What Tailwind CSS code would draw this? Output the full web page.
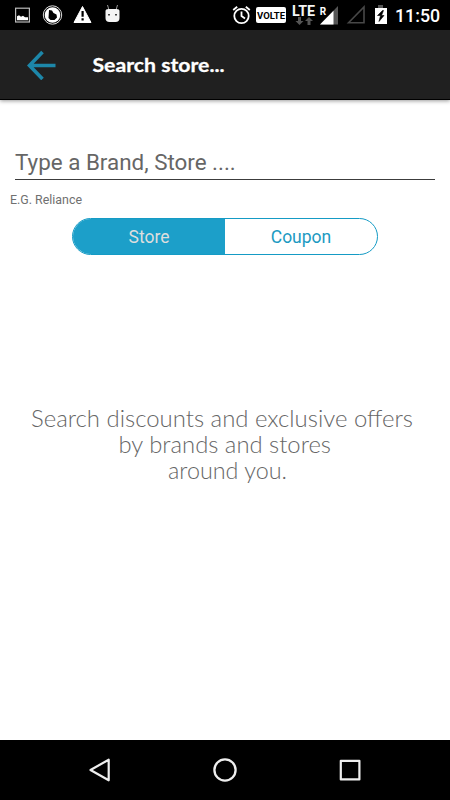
<!DOCTYPE html>
<html lang="en">
<head>
<meta charset="utf-8">
<title>Search store</title>
<script src="https://cdn.jsdelivr.net/npm/@tailwindcss/browser@4"></script>
</head>
<body class="bg-white">
<div class="w-[450px] h-[800px] flex flex-col overflow-hidden bg-white font-['Roboto',sans-serif]">
  <div class="h-[30px] shrink-0 bg-black flex text-white">
    <svg class="ml-[15px] w-[15px] h-[30px]" viewBox="0 0 15 30"><rect x=".6" y="8.2" width="13.8" height="13.8" fill="none" stroke="#bbb" stroke-width="1.2"/><path d="M2 20.300v-4l2-1 2 1.500 2-1 2 1.500h3v3z" fill="#fff"/></svg>
    <svg class="ml-[12px] w-[21px] h-[30px]" viewBox="0 0 21 30"><circle cx="10.5" cy="15" r="9.2" fill="none" stroke="#ddd" stroke-width="1"/><circle cx="10.5" cy="15" r="7.8" fill="#fff"/><path d="M7 10l3 .5 1.500 2.500 3 1.500 .5 3-2.500 2.500H8.500L6.500 18z" fill="#000"/></svg>
    <svg class="ml-[10px] w-[19px] h-[30px]" viewBox="0 0 19 30"><path d="M9.5 6.500L18 22.500H1z" fill="#fff" stroke="#fff" stroke-linejoin="round"/><path d="M8.500 11h2.200v5.800H8.500zm0 7.300h2.200v2.200H8.500z" fill="#000"/></svg>
    <svg class="ml-[13px] w-[15px] h-[30px]" viewBox="0 0 15 30"><path d="M2.500 5l1.500 5M12.500 5L11 10" stroke="#999" fill="none"/><path d="M.5 18V11q0-2 3-2h8q3 0 3 2v7q0 4-4 4h-6q-4 0-4-4z" fill="#f4f4f4"/><path d="M3 14h2v1.500H3zm7 0h2v1.500h-2z" fill="#444"/></svg>
    <svg class="ml-[112px] w-[19px] h-[30px]" viewBox="0 0 19 30"><g fill="none" stroke="#fff" stroke-width="1.800"><circle cx="9.500" cy="16" r="7.200"/><path d="M1.200 10l4-3.300M17.800 10l-4-3.300M9.500 11.500V16l3.500 2.500"/></g></svg>
    <div class="ml-[5px] mt-[7px] w-[30px] h-4 rounded-[2px] bg-white text-black font-bold text-[9.500px] leading-[17px] text-center">VOLTE</div>
    <div class="ml-[6px] mt-[3px] w-[24px]">
      <svg class="w-[24px] h-[14px] block overflow-visible" viewBox="0 0 24 14"><text x="0" y="13.300" textLength="23" lengthAdjust="spacingAndGlyphs" font-family="Roboto" font-size="14" font-weight="700" fill="#f4f4f4">LTE</text></svg>
      <svg class="w-[24px] h-[8px] block" viewBox="0 0 24 8"><path d="M6 0h3v4h2.500l-4 4-4-4H6zM15.500 8h3V4H21l-4-4-4 4h2.500z" fill="#555"/></svg>
    </div>
    <svg class="ml-[4px] w-[20px] h-[30px] overflow-visible" viewBox="0 0 20 30"><path d="M0 24.500L18 6v18.500z" fill="#555"/><path d="M0 24.500L13.500 10.700V24.500z" fill="#fff"/><text x="-.3" y="14.700" font-family="Roboto" font-weight="700" font-size="10" fill="#fff">R</text></svg>
    <svg class="ml-[6px] w-[20px] h-[30px]" viewBox="0 0 20 30"><path d="M2.500 22.800L18 7v15.800z" fill="none" stroke="#484848" stroke-width="1.600"/></svg>
    <svg class="ml-[8px] w-[14px] h-[30px]" viewBox="0 0 14 30"><path d="M4 5h5v3H4z" fill="#555"/><path d="M1 8h12v16H1z" fill="#fff"/><path d="M8.500 10.500L3.500 15.500h3L5 21.500l5-6H7.500l2-5z" fill="#000" stroke="#000" stroke-width=".6"/></svg>
    <div class="ml-[7px] text-[17.800px] leading-[32px] font-medium whitespace-nowrap">11:50</div>
  </div>
  <header class="h-[70px] shrink-0 relative bg-[#202020] border-b border-black shadow-[0_1px_4px_rgba(0,0,0,0.400)] flex items-center">
    <svg class="ml-[26px] w-[32px] h-[30px]" viewBox="0 0 32 30" fill="none" stroke="#1d87a9" stroke-width="3.600"><path d="M29.500 15.500H4M16.500 2L3.500 15.500 16.500 29"/></svg>
    <svg class="ml-[34px] w-[140px] h-[30px]" viewBox="0 0 140 30"><text x=".5" y="22.300" textLength="132" lengthAdjust="spacingAndGlyphs" font-family="Lato" font-weight="700" font-size="19.800" fill="#fff" stroke="#fff" stroke-width=".3">Search store...</text></svg>
  </header>
  <main class="grow flex flex-col">
    <div class="mt-[44px] mx-[15px] h-[36px] border-b border-[#3c3c3c] text-[22.400px] leading-[36px] text-[#666] whitespace-nowrap">Type a Brand, Store ....</div>
    <div class="mt-[12px] ml-[10px] h-[16px] text-[12.400px] leading-[16px] text-[#707070]">E.G. Reliance</div>
    <div class="mt-[10px] ml-[72px] w-[306px] h-[37px] rounded-full border border-[#159bc5] overflow-hidden flex text-[17.500px] leading-[37px] text-center">
      <div class="w-[152px] bg-[#1c9fc9] text-[#dedede]">Store</div>
      <div class="grow text-[#1c9ac2]">Coupon</div>
    </div>
    <svg class="mt-[145px] w-[450px] h-[90px]" viewBox="0 0 450 90" font-family="Lato" font-weight="300" font-size="23" fill="#666"><text x="31" y="26.500" textLength="382" lengthAdjust="spacingAndGlyphs">Search discounts and exclusive offers</text><text x="118.500" y="53" textLength="212.500" lengthAdjust="spacingAndGlyphs">by brands and stores</text><text x="168" y="79" textLength="119" lengthAdjust="spacingAndGlyphs">around you.</text></svg>
  </main>
  <nav class="h-[60px] shrink-0 bg-black flex items-center justify-center gap-[99px]">
    <svg class="w-[26px] h-[26px]" viewBox="0 0 26 26" fill="none" stroke="#eee" stroke-width="2.200" stroke-linejoin="round"><path d="M21.700 2.700v20.600L3.500 13z"/></svg>
    <svg class="w-[26px] h-[26px]" viewBox="0 0 26 26" fill="none" stroke="#eee" stroke-width="2.300"><circle cx="13" cy="13" r="10.600"/></svg>
    <svg class="w-[26px] h-[26px]" viewBox="0 0 26 26" fill="none" stroke="#eee" stroke-width="2.200" stroke-linejoin="round"><path d="M3.800 3.800h18.600v18.600H3.800z"/></svg>
  </nav>
</div>
</body>
</html>
